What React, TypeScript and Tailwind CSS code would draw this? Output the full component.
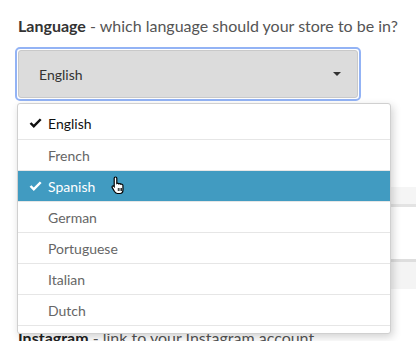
import React from 'react';

const languages = ['English', 'French', 'Spanish', 'German', 'Portuguese', 'Italian', 'Dutch'];

const Check = ({ color }: { color: string }) => (
  <svg width="13" height="11" viewBox="0 0 13 11" className="shrink-0">
    <path d="M0.6 5.8 L4.8 10 L12.6 2 L10.8 0.4 L4.8 6.6 L2.4 4.2 Z" fill={color} />
  </svg>
);

const HandCursor = () => (
  <svg width="16" height="19" viewBox="0 0 16 19" className="absolute left-[93px] top-[5px]">
    <path
      d="M4.5 1 C5.3 1 5.8 1.5 5.8 2.3 L5.8 7.5 C6.4 7.1 7.4 7.2 7.8 7.9 C8.4 7.5 9.4 7.6 9.8 8.3 C10.5 7.9 11.6 8.2 11.9 9.1 L12 13.5 C12 15.5 11 17.5 9 17.5 L6.5 17.5 C5 17.5 4.3 16.7 3.5 15.5 L1.2 11.6 C0.8 10.9 1.1 10.2 1.7 10 C2.3 9.8 2.8 10.1 3.2 10.6 L3.2 2.3 C3.2 1.5 3.7 1 4.5 1 Z"
      fill="#fff"
      stroke="#000"
      strokeWidth="1.2"
    />
    <path d="M7.3 12 L7.3 15 M9 12 L9 15 M10.6 12 L10.6 15" stroke="#000" strokeWidth="0.9" />
  </svg>
);

export default function App() {
  return (
    <div className="relative w-[416px] h-[341px] overflow-hidden bg-white font-['Lato',sans-serif]">
      <div className="pt-[15px] pl-[18px]">
        <p className="text-[16px] leading-[22px] text-[#555] whitespace-nowrap">
          <span className="font-bold text-[#333]">Language</span> - which language should your store to be in?
        </p>
        <div className="mt-[10px] ml-[-3px] w-[346px] h-[54px] rounded-[5px] border-[2px] border-[#93b3f5] p-px">
          <div className="h-full rounded-[3px] bg-[#dcdcdc] border border-[#c9c9c9] flex items-center justify-between pl-[20px] pr-[16px]">
            <span className="text-[14px] text-[#333]">English</span>
            <svg width="8" height="4" viewBox="0 0 8 4">
              <path d="M0 0 L8 0 L4 4 Z" fill="#333" />
            </svg>
          </div>
        </div>
      </div>

      {/* content behind the open menu */}
      <div className="mt-[86px] ml-[60px] h-[20px] bg-[#f5f5f5] border-b-[3px] border-[#e3e3e3]" />
      <div className="mt-[52px] ml-[60px] h-[30px] bg-[#f4f4f4] border-t-[3px] border-[#dedede]" />
      <p className="mt-[38px] pl-[18px] text-[16px] leading-[22px] text-[#555] whitespace-nowrap">
        <span className="font-bold text-[#222]">Instagram</span> - link to your Instagram account
      </p>

      {/* open dropdown menu */}
      <div className="absolute left-[17px] top-[103px] w-[374px] h-[231px] bg-white border border-[#d0d0d0] rounded-[3px] shadow-[2px_3px_8px_rgba(0,0,0,0.18)] pt-[4px] overflow-hidden">
        {languages.map((lang, i) => {
          const selected = lang === 'Spanish';
          const checked = lang === 'English' || lang === 'Spanish';
          return (
            <div
              key={lang}
              className={
                'relative flex items-center h-[31px] text-[14px] ' +
                (i > 0 ? 'border-t border-[#e6e6e6] ' : '') +
                (selected ? 'bg-[#419bc1] text-white' : lang === 'English' ? 'text-[#111]' : 'text-[#666]')
              }
            >
              <div className="w-[30px] pl-[11px] flex items-center">
                {checked && <Check color={selected ? '#fff' : '#111'} />}
              </div>
              <span>{lang}</span>
              {selected && <HandCursor />}
            </div>
          );
        })}
        <div className="border-t border-[#e6e6e6]" />
      </div>
    </div>
  );
}
